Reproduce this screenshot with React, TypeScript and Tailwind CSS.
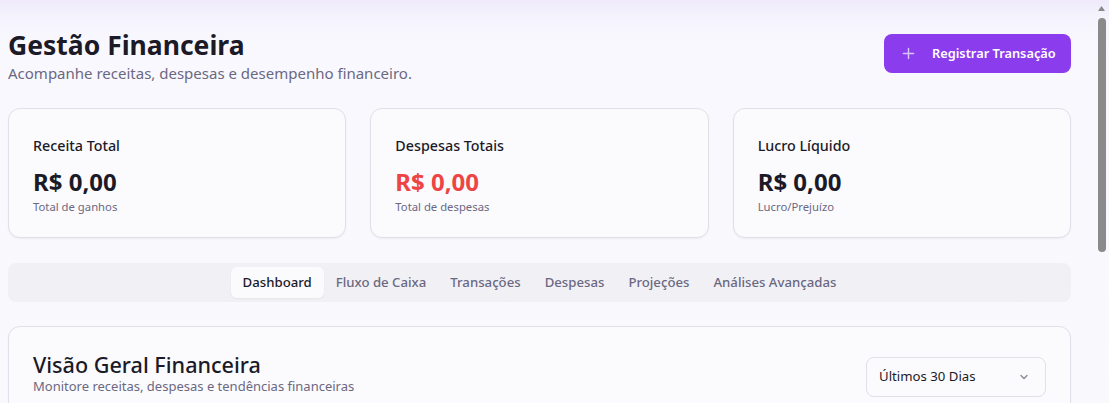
import React from "react";

const font = { fontFamily: '"Noto Sans", "Open Sans", sans-serif' };

function StatCard({ title, value, sub, red }: { title: string; value: string; sub: string; red?: boolean }) {
  return (
    <div className="rounded-xl border border-[#e1e0e8] bg-[#fbfbfe] shadow-[0_1px_2px_rgba(0,0,0,0.05)] px-6 pt-[27px] pb-6 h-[130px]">
      <div className="text-[14.3px] font-medium text-[#1c1a27] leading-5">{title}</div>
      <div className={`mt-[12px] text-[24px] font-bold leading-7 ${red ? "text-[#ef4444]" : "text-[#1c1a27]"}`}>{value}</div>
      <div className="text-[11.3px] text-[#6b6882] leading-4 mt-[3px]">{sub}</div>
    </div>
  );
}

export default function App() {
  const tabs = ["Dashboard", "Fluxo de Caixa", "Transações", "Despesas", "Projeções", "Análises Avançadas"];
  return (
    <div style={font} className="relative min-h-[670px] bg-[linear-gradient(to_bottom,#eeeafb_0px,#f6f4fd_20px,#f9f8fe_45px,#f9f9fd_100%)] pl-2 pr-[38px] pt-[29px]">
      <div className="flex items-start justify-between">
        <div>
          <h1 className="text-[26.5px] font-bold leading-[32px] text-[#1c1a27]">Gestão Financeira</h1>
          <p className="text-[15px] text-[#6b6882] leading-[22px] mt-[1px]">Acompanhe receitas, despesas e desempenho financeiro.</p>
        </div>
        <button className="mt-[5px] h-[39px] w-[187px] rounded-lg bg-[#8b3ced] text-white flex items-center pl-[18px] gap-[17px] text-[12.8px] font-semibold">
          <svg width="13" height="13" viewBox="0 0 14 14" fill="none" stroke="#d8c4fa" strokeWidth="1.6" strokeLinecap="round">
            <path d="M7 1.5v11M1.5 7h11" />
          </svg>
          <span>Registrar Transação</span>
        </button>
      </div>

      <div className="grid grid-cols-3 gap-6 mt-[24px]">
        <StatCard title="Receita Total" value="R$ 0,00" sub="Total de ganhos" />
        <StatCard title="Despesas Totais" value="R$ 0,00" sub="Total de despesas" red />
        <StatCard title="Lucro Líquido" value="R$ 0,00" sub="Lucro/Prejuízo" />
      </div>

      <div className="mt-[25px] h-[39px] rounded-lg bg-[#f1f1f5] flex items-center justify-center gap-0 px-1">
        {tabs.map((t, i) => (
          <div
            key={t}
            className={`h-[31px] flex items-center px-3 rounded-md text-[13.2px] font-medium ${
              i === 0 ? "bg-[#fbfbfe] text-[#1c1a27] shadow-[0_1px_2px_rgba(0,0,0,0.05)]" : "text-[#6b6882]"
            }`}
          >
            {t}
          </div>
        ))}
      </div>

      <div className="mt-[24px] rounded-xl border border-[#e1e0e8] bg-[#fbfbfe] shadow-[0_1px_2px_rgba(0,0,0,0.05)] px-6 pt-[25px] pb-6 h-[300px]">
        <div className="flex items-start justify-between">
          <div>
            <h2 className="text-[21.6px] font-medium leading-[26px] text-[#1c1a27]">Visão Geral Financeira</h2>
            <p className="text-[13px] text-[#6b6882] leading-4">Monitore receitas, despesas e tendências financeiras</p>
          </div>
          <div className="mt-[5px] w-[180px] h-[40px] rounded-lg border border-[#e1e0e8] bg-[#fbfbfe] flex items-center justify-between pl-3 pr-[15px] text-[13.2px] text-[#1c1a27]">
            <span>Últimos 30 Dias</span>
            <svg width="12" height="12" viewBox="0 0 12 12" fill="none" stroke="#8a8797" strokeWidth="1.3" strokeLinecap="round" strokeLinejoin="round">
              <path d="M3 4.5l3 3 3-3" />
            </svg>
          </div>
        </div>
      </div>

      <div className="fixed top-0 right-0 w-[15px] h-[403px] bg-transparent">
        <svg className="absolute left-[3px] top-[5px]" width="9" height="7" viewBox="0 0 9 7">
          <path d="M4.5 1L8 6H1z" fill="#8a8a8a" />
        </svg>
        <div className="absolute left-[4px] top-[18px] w-[8px] h-[234px] rounded-full bg-[#8a8a8a]" />
      </div>
    </div>
  );
}
